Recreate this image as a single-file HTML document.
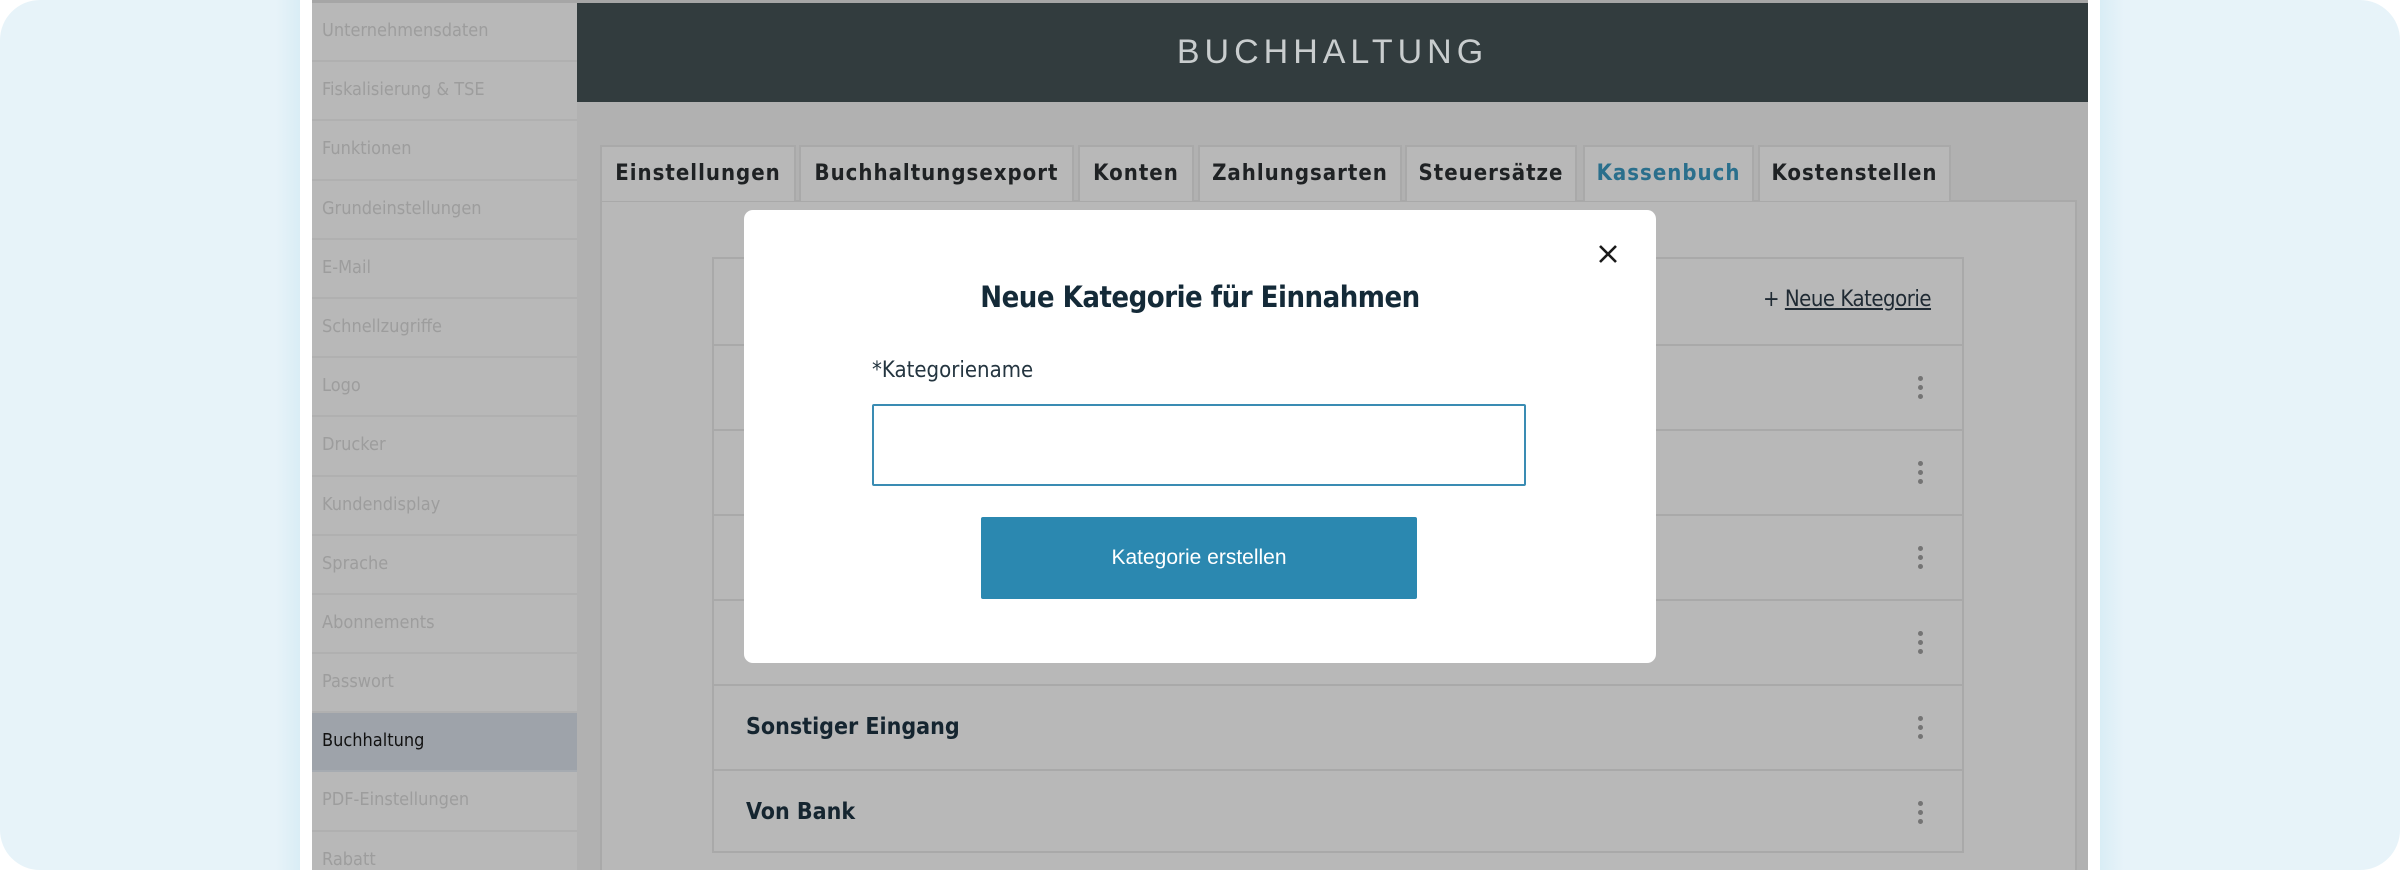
<!DOCTYPE html>
<html><head><meta charset="utf-8"><style>
*{margin:0;padding:0;box-sizing:border-box}
body{width:2400px;height:870px;background:#fff;position:relative;overflow:hidden;font-family:"DejaVu Sans Condensed","Liberation Sans",sans-serif}
.bg{position:absolute;left:0;top:0;width:2400px;height:870px;background:#e7f3f9;border-radius:40px}
.frame{position:absolute;left:300px;top:0;width:1800px;height:870px;background:#fff}
.l{position:absolute;left:276px;top:0;width:24px;height:870px;background:linear-gradient(to right,#e7f3f9,#d9edf5)}
.r{position:absolute;left:2100px;top:0;width:24px;height:870px;background:linear-gradient(to left,#e7f3f9,#d9edf5)}
.app{position:absolute;left:312px;top:0;width:1776px;height:870px;background:#b1b1b1;overflow:hidden}
.topstrip{position:absolute;left:0;top:0;width:1776px;height:3px;background:#a6a6a6}
.side{position:absolute;left:0;top:3px;width:265px;height:867px;background:#b8b8b8}
.si{height:59.2px;border-bottom:2px solid #b0b0b0;color:#9d9d9d;font-size:18px;padding-left:10px;line-height:56px}
.si.act{background:#9ea3aa;color:#111;border-bottom-color:#a6abb1}
.hdr{position:absolute;left:265px;top:3px;width:1511px;height:99px;background:#323c3e;color:#c9cdce;font-size:34px;letter-spacing:5px;text-align:center;line-height:99px;font-family:"Liberation Sans",sans-serif;font-weight:300}
.tab{position:absolute;top:145px;height:56px;background:#b8b8b8;border:2px solid #a9a9a9;border-bottom:none;font-size:22px;font-weight:bold;color:#1f2224;text-align:center;line-height:54px;letter-spacing:1px}
.box{position:absolute;left:288px;top:200px;width:1477px;height:700px;background:#b8b8b8;border:2px solid #a9a9a9}
.list{position:absolute;left:400px;top:257px;width:1252px;height:596px;border:2px solid #a9a9a9}
.row{position:absolute;left:0;width:1248px;height:85px;border-top:2px solid #a9a9a9;font-size:23px;font-weight:bold;color:#152530;padding-left:32px;line-height:82px}
.dots{position:absolute;right:38px;top:30px;width:6px}
.dots i{display:block;width:5px;height:5px;border-radius:50%;background:#747474;margin-bottom:4px}
.nk{position:absolute;left:1763px;top:287px;font-size:22px;color:#1f2a33;letter-spacing:-0.5px}
.nk u{text-decoration:underline}
.modal{position:absolute;left:744px;top:210px;width:912px;height:453px;background:#fff;border-radius:9px}
.title{position:absolute;left:744px;width:912px;top:280px;text-align:center;font-size:29px;font-weight:bold;color:#142a38;letter-spacing:-0.5px}
.x{position:absolute;left:1594px;top:240px;width:28px;height:28px}
.lab{position:absolute;left:872px;top:358px;font-size:22px;color:#243540}
.inp{position:absolute;left:872px;top:404px;width:654px;height:82px;border:2px solid #3a8cb3;border-radius:2px;background:#fff}
.btn{position:absolute;left:981px;top:517px;width:436px;height:82px;background:#2b88b0;border-radius:2px;color:#fff;font-family:"Liberation Sans",sans-serif;font-size:21px;text-align:center;line-height:82px}
</style></head><body>
<div class="bg"></div>
<div class="frame"></div>
<div class="l"></div><div class="r"></div>
<div class="app">
<div class="topstrip"></div>
<div class="side">
<div class="si">Unternehmensdaten</div>
<div class="si">Fiskalisierung &amp; TSE</div>
<div class="si">Funktionen</div>
<div class="si">Grundeinstellungen</div>
<div class="si">E-Mail</div>
<div class="si">Schnellzugriffe</div>
<div class="si">Logo</div>
<div class="si">Drucker</div>
<div class="si">Kundendisplay</div>
<div class="si">Sprache</div>
<div class="si">Abonnements</div>
<div class="si">Passwort</div>
<div class="si act">Buchhaltung</div>
<div class="si">PDF-Einstellungen</div>
<div class="si">Rabatt</div>
</div>
<div class="hdr">BUCHHALTUNG</div>
<div class="box"></div>
<div class="tab" style="left:288px;width:196px">Einstellungen</div>
<div class="tab" style="left:487px;width:275px">Buchhaltungsexport</div>
<div class="tab" style="left:766px;width:116px">Konten</div>
<div class="tab" style="left:886px;width:204px">Zahlungsarten</div>
<div class="tab" style="left:1093px;width:172px">Steuersätze</div>
<div class="tab" style="left:1271px;width:171px;color:#2a6f8c">Kassenbuch</div>
<div class="tab" style="left:1446px;width:193px">Kostenstellen</div>
<div class="list">
<div class="row" style="top:85px;border-top:2px solid #a9a9a9"><div class="dots"><i></i><i></i><i></i></div></div>
<div class="row" style="top:170px"><div class="dots"><i></i><i></i><i></i></div></div>
<div class="row" style="top:255px"><div class="dots"><i></i><i></i><i></i></div></div>
<div class="row" style="top:340px"><div class="dots"><i></i><i></i><i></i></div></div>
<div class="row" style="top:425px">Sonstiger Eingang<div class="dots"><i></i><i></i><i></i></div></div>
<div class="row" style="top:510px">Von Bank<div class="dots"><i></i><i></i><i></i></div></div>
</div>
</div>
<div class="nk">+ <u>Neue Kategorie</u></div>
<div class="modal"></div>
<div class="title">Neue Kategorie für Einnahmen</div>
<svg class="x" viewBox="0 0 28 28"><path d="M6 6L22 22M22 6L6 22" stroke="#1a1a1a" stroke-width="2.6" fill="none"/></svg>
<div class="lab">*Kategoriename</div>
<div class="inp"></div>
<div class="btn">Kategorie erstellen</div>
</body></html>
